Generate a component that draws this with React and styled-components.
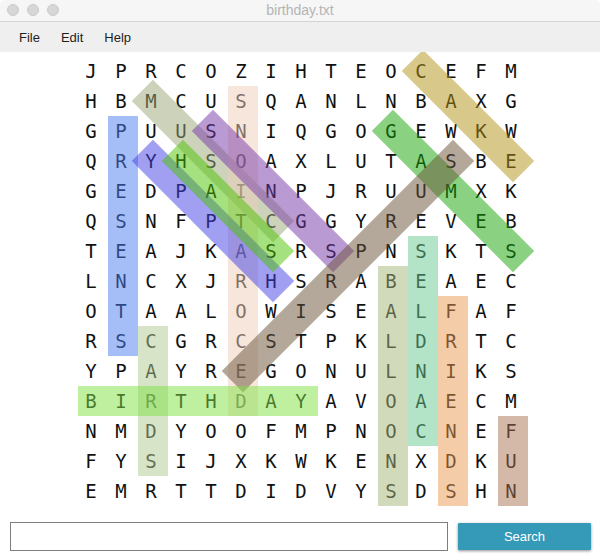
import React from "react";
import styled, { createGlobalStyle } from "styled-components";

const GRID = [
  "JPRCOZIHTEOCEFM",
  "HBMCUSQANLNBAXG",
  "GPUUSNIQGOGEWKW",
  "QRYHSOAXLUTASBE",
  "GEDPAINPJRUUMXK",
  "QSNFPTCGGYREVEB",
  "TEAJKASRSPNSKTS",
  "LNCXJRHSRABEAEC",
  "OTAALOWISEALFAF",
  "RSCGRCSTPKLDRTC",
  "YPAYREGONULNIKS",
  "BIRTHDAYAVOAECM",
  "NMDYOOFMPNOCNEF",
  "FYSIJXKWKENXDKU",
  "EMRTTDIDVYSDSHN",
];

const CELL = 30;

// start [col,row], end [col,row], colour drawn at half alpha
const WORDS = [
  { word: "PRESENTS", from: [1, 2], to: [1, 9], color: "#4d7df1" },
  { word: "MUSIC", from: [2, 1], to: [6, 5], color: "#9ba777" },
  { word: "DECORATIONS", from: [5, 11], to: [5, 1], color: "#edcdb9" },
  { word: "SONGS", from: [4, 2], to: [8, 6], color: "#7535a8" },
  { word: "HAPPY", from: [6, 7], to: [2, 3], color: "#4140e3" },
  { word: "HATS", from: [3, 3], to: [6, 6], color: "#4bc300" },
  { word: "CAKE", from: [11, 0], to: [14, 3], color: "#b19115" },
  { word: "GAMES", from: [10, 2], to: [14, 6], color: "#15a505" },
  { word: "SURPRISE", from: [12, 3], to: [5, 10], color: "#695137" },
  { word: "BALLOONS", from: [10, 7], to: [10, 14], color: "#a5b579" },
  { word: "CANDLES", from: [11, 12], to: [11, 6], color: "#69c991" },
  { word: "FRIENDS", from: [12, 8], to: [12, 14], color: "#e99951" },
  { word: "FUN", from: [14, 12], to: [14, 14], color: "#a97351" },
  { word: "CARDS", from: [2, 9], to: [2, 13], color: "#afc991" },
  { word: "BIRTHDAY", from: [0, 11], to: [7, 11], color: "#7de141" },
];

const GlobalStyle = createGlobalStyle`
  html, body {
    margin: 0;
    padding: 0;
    background: #fff;
  }
  * {
    box-sizing: border-box;
  }
`;

const Window = styled.div`
  width: 600px;
  height: 560px;
  display: flex;
  flex-direction: column;
  background: #fff;
  font-family: "Liberation Sans", Arial, sans-serif;
  overflow: hidden;
`;

const TitleBar = styled.div`
  height: 22px;
  flex-shrink: 0;
  display: grid;
  grid-template-columns: 1fr auto 1fr;
  align-items: center;
  padding: 0 7px;
  background: #f6f6f6;
  border-bottom: 1px solid #d4d4d4;
  border-radius: 5px 5px 0 0;
`;

const Lights = styled.div`
  display: flex;
  gap: 8px;
  padding-bottom: 1px;
`;

const Light = styled.span`
  width: 12px;
  height: 12px;
  border-radius: 50%;
  background: #d7d7d7;
  border: 1px solid #cbcbcb;
`;

const Title = styled.div`
  font-size: 14px;
  color: #b4b4b4;
  padding-bottom: 1px;
`;

const MenuBar = styled.div`
  height: 30px;
  flex-shrink: 0;
  display: flex;
  align-items: center;
  gap: 21px;
  padding: 0 0 0 19px;
  background: #efefef;
`;

const MenuItem = styled.span`
  font-size: 13px;
  color: #1e1e1e;
`;

const Main = styled.div`
  height: 460px;
  flex-shrink: 0;
  overflow: hidden;
  padding: 4px 0 0 78px;
`;

const Board = styled.div`
  position: relative;
  width: ${CELL * 15}px;
  height: ${CELL * 15}px;
`;

const LetterGrid = styled.div`
  display: grid;
  grid-template-columns: repeat(15, ${CELL}px);
  grid-auto-rows: ${CELL}px;
`;

const Cell = styled.div`
  display: flex;
  align-items: center;
  justify-content: center;
  padding-right: 4px;
  font-family: "DejaVu Sans Mono", monospace;
  font-size: 19px;
  color: #111;
`;

const Overlay = styled.svg`
  position: absolute;
  left: 0;
  top: 0;
  overflow: visible;
  pointer-events: none;
`;

const Footer = styled.div`
  flex: 1;
  display: flex;
  align-items: center;
  gap: 10px;
  padding: 0 9px 0 10px;
`;

const SearchInput = styled.input`
  width: 438px;
  height: 29px;
  border: 1px solid #7d7d7d;
  border-radius: 0;
  outline: none;
  padding: 0 6px;
  font-family: "Liberation Sans", Arial, sans-serif;
  font-size: 13px;
`;

const SearchButton = styled.button`
  width: 133px;
  height: 27px;
  border: none;
  border-radius: 1px;
  background: #3599b8;
  color: #fff;
  font-family: "Liberation Sans", Arial, sans-serif;
  font-size: 13px;
  box-shadow: 0 1px 3px rgba(0, 0, 0, 0.45);
  cursor: pointer;
`;

function Highlight({ from, to, color }) {
  const x0 = from[0] * CELL + CELL / 2;
  const y0 = from[1] * CELL + CELL / 2;
  const x1 = to[0] * CELL + CELL / 2;
  const y1 = to[1] * CELL + CELL / 2;
  const len = Math.hypot(x1 - x0, y1 - y0) + CELL;
  const deg = (Math.atan2(y1 - y0, x1 - x0) * 180) / Math.PI;
  return (
    <rect
      x={-len / 2}
      y={-CELL / 2}
      width={len}
      height={CELL}
      fill={color}
      fillOpacity={0.5}
      transform={`translate(${(x0 + x1) / 2} ${(y0 + y1) / 2}) rotate(${deg})`}
    />
  );
}

export default function App() {
  return (
    <>
      <GlobalStyle />
      <Window>
        <TitleBar>
          <Lights>
            <Light />
            <Light />
            <Light />
          </Lights>
          <Title>birthday.txt</Title>
          <div />
        </TitleBar>
        <MenuBar>
          <MenuItem>File</MenuItem>
          <MenuItem>Edit</MenuItem>
          <MenuItem>Help</MenuItem>
        </MenuBar>
        <Main>
          <Board>
            <LetterGrid>
              {GRID.map((row, r) =>
                row.split("").map((ch, c) => <Cell key={r + "-" + c}>{ch}</Cell>)
              )}
            </LetterGrid>
            <Overlay width={CELL * 15} height={CELL * 15}>
              {WORDS.map((w) => (
                <Highlight key={w.word} from={w.from} to={w.to} color={w.color} />
              ))}
            </Overlay>
          </Board>
        </Main>
        <Footer>
          <SearchInput type="text" />
          <SearchButton>Search</SearchButton>
        </Footer>
      </Window>
    </>
  );
}
